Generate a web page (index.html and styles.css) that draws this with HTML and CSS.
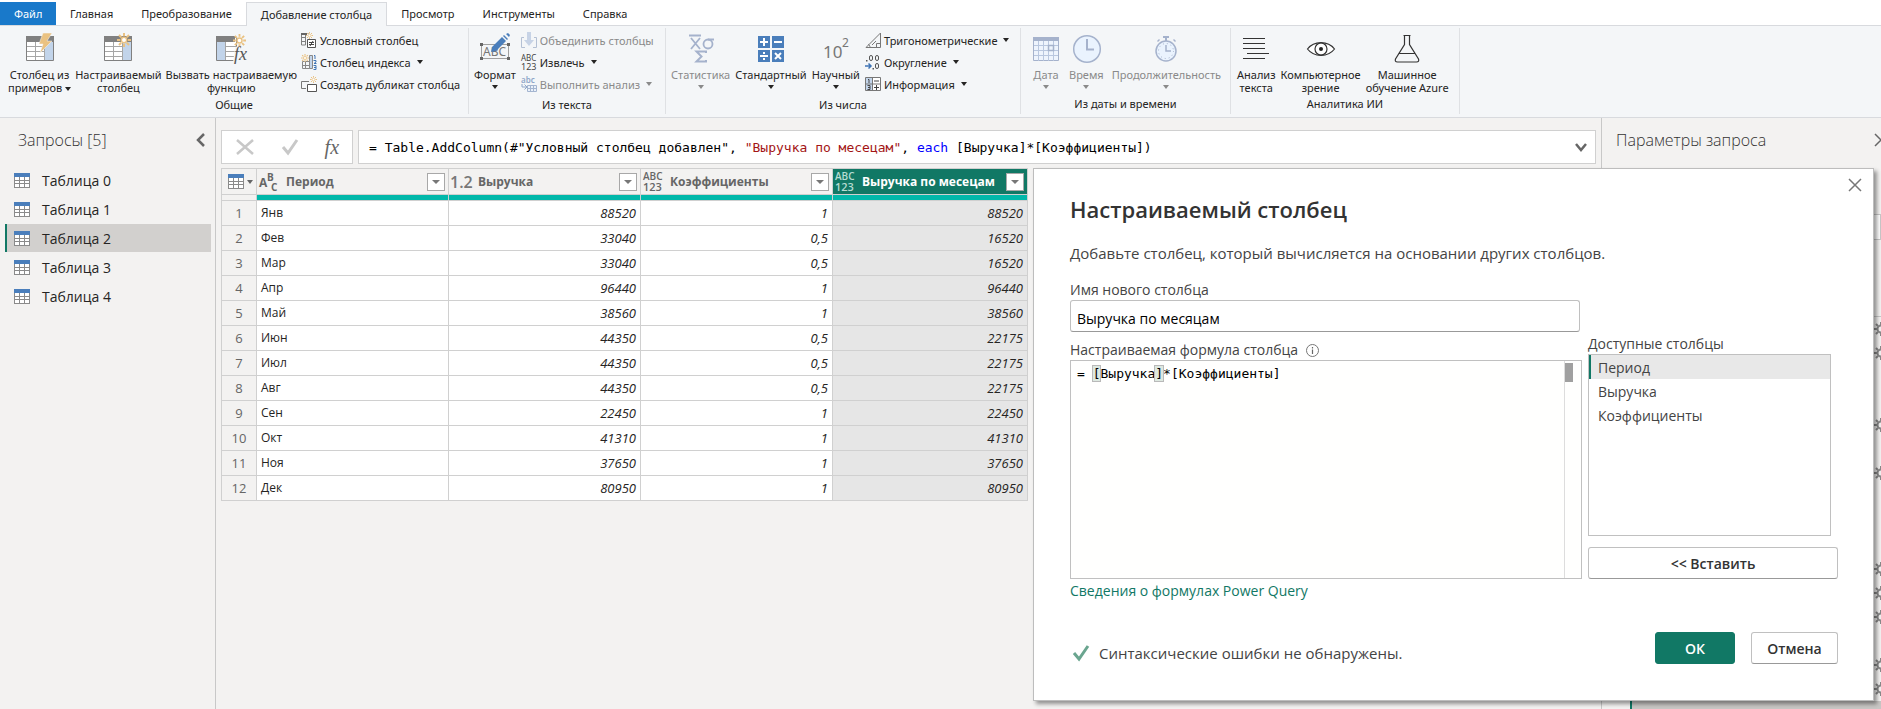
FILE: index.html
```html
<!DOCTYPE html>
<html lang="ru">
<head>
<meta charset="utf-8">
<title>Редактор Power Query</title>
<link rel="stylesheet" href="styles.css">
</head>
<body>
<svg class="defs" width="0" height="0" aria-hidden="true">
  <symbol id="burst" viewBox="0 0 14 14"><path d="M7 0v3M7 11v3M0 7h3M11 7h3M2 2l2.200 2.200M9.800 9.800L12 12M12 2L9.800 4.200M4.200 9.800L2 12" stroke="#eac282" stroke-width="2" fill="none"/><circle cx="7" cy="7" r="2.700" fill="#fff" stroke="#eac282" stroke-width="1.500"/></symbol>
  <symbol id="table16" viewBox="0 0 16 15"><path d="M0 0h16v15H0z" fill="#8a8a8a"/><path d="M0 0h16v4H0z" fill="#4a7ebb"/><path d="M1 4h4v3H1zM6 4h4v3H6zM11 4h4v3h-4zM1 8h4v2H1zM6 8h4v2H6zM11 8h4v2h-4zM1 11h4v3H1zM6 11h4v3H6zM11 11h4v3h-4z" fill="#fff"/></symbol>
  <symbol id="gear" viewBox="0 0 14 14"><circle cx="7" cy="7" r="3.500" fill="none" stroke="#8a8a8a" stroke-width="2"/><path d="M7 0v3M7 11v3M0 7h3M11 7h3M2 2l2 2M10 10l2 2M12 2l-2 2M4 10l-2 2" stroke="#8a8a8a" stroke-width="2"/></symbol>
</svg>
<div class="app">
  <nav class="tabs">
    <button class="tab file">Файл</button>
    <button class="tab">Главная</button>
    <button class="tab">Преобразование</button>
    <button class="tab active">Добавление столбца</button>
    <button class="tab">Просмотр</button>
    <button class="tab">Инструменты</button>
    <button class="tab">Справка</button>
  </nav>
  <div class="ribbon">
    <section class="group g1">
      <div class="tools">
        <button class="big"><svg width="30" height="30" viewBox="0 0 30 30"><path d="M1.500 4.500h27v23h-27z" fill="#fff" stroke="#808080"/><path d="M1 3h28v6H1z" fill="#808080"/><path d="M19 9h9v18h-9z" fill="#c2d4ea"/><path d="M2 13.500h17M2 18.500h17M2 23.500h17M10.500 9v18M19.500 9v18" stroke="#a6a6a6"/><path d="M18 0h9l-5 8h5L15 20l3-9h-4z" fill="#eac282" stroke="#f4f6f8" stroke-width=".5"/></svg><span>Столбец из<br>примеров<i class="dd"></i></span></button>
        <button class="big"><svg width="30" height="30" viewBox="0 0 30 30"><path d="M1.500 4.500h27v23h-27z" fill="#fff" stroke="#808080"/><path d="M1 3h28v6H1z" fill="#808080"/><path d="M19 9h9v18h-9z" fill="#c2d4ea"/><path d="M2 13.500h17M2 18.500h17M2 23.500h17M10.500 9v18M19.500 9v18" stroke="#a6a6a6"/><use href="#burst" x="14" y="0" width="14" height="14"/></svg><span>Настраиваемый<br>столбец</span></button>
        <button class="big"><svg width="30" height="30" viewBox="0 0 30 30"><path d="M.5 4.500h20v23H.5z" fill="#fff" stroke="#808080"/><path d="M0 3h19v6H0z" fill="#808080"/><path d="M1 9h8v18H1z" fill="#c2d4ea"/><path d="M9 13.500h12M9 18.500h12M9 23.500h12M9.500 9v18" stroke="#a6a6a6"/><path d="M19 14h11v16H17z" fill="#f4f6f8"/><use href="#burst" x="17" y="1" width="13" height="13"/><text x="18" y="27" class="fxi" font-size="18">fx</text></svg><span>Вызвать настраиваемую<br>функцию</span></button>
        <div class="list">
          <button class="small"><svg width="16" height="16" viewBox="0 0 16 16"><path d="M.5 1.500h7M.5 1v12h4M.5 5.500h4M.5 9.500h4M4.500 3v10" stroke="#808080" fill="none"/><path d="M0 1h6v2H0z" fill="#666"/><use href="#burst" x="5" y="0" width="7" height="7"/><path d="M6.500 7.500h8v8h-8z" fill="#fff" stroke="#555"/><path d="M8 10.500h5M8 12.500h5M12 9l-3 5" stroke="#444" fill="none"/></svg>Условный столбец</button>
          <button class="small"><svg width="16" height="16" viewBox="0 0 16 16"><path d="M1.500 7.500h7v7h-7zM4.500 7v8M1 11.500h7" stroke="#888" fill="none"/><path d="M8.500 1.500h3v13h-3z" fill="#c2d4ea" stroke="#888"/><use href="#burst" x="0" y="0" width="8" height="8"/><path d="M13 1.500h1V5M12.500 6.500h2.500v1.500l-2 1.500h2.500M12.500 11.500h2.500v4h-2.500M13 13.500h2" fill="none" stroke="#3f74b5"/></svg>Столбец индекса<i class="dd gap"></i></button>
          <button class="small"><svg width="16" height="16" viewBox="0 0 16 16"><path d="M8 5.500H.5v7H5" fill="none" stroke="#777"/><path d="M6.500 8.500h9v7h-9z" fill="#fff" stroke="#555"/><use href="#burst" x="9" y="0" width="7" height="7"/></svg>Создать дубликат столбца</button>
        </div>
      </div>
      <h2>Общие</h2>
    </section>
    <section class="group g2">
      <div class="tools">
        <button class="big"><svg width="30" height="30" viewBox="0 0 30 30"><path d="M1.500 11.500h27v14h-27z" fill="none" stroke="#a0a0a0"/><text x="3" y="23" font-size="12" fill="#777">ABC</text><path d="M0 10h3v3H0zM27 10h3v3h-3zM0 24h3v3H0zM27 24h3v3h-3z" fill="#666"/><path d="M22 4l4 4-10 10-5 1 1-5zM23 3l1-1 4 4-1 1zM26 1l2-1 2 2-1 2z" fill="#4a7ebb"/></svg><span>Формат<i class="dd under"></i></span></button>
        <div class="list">
          <button class="small off"><svg width="16" height="16" viewBox="0 0 16 16"><path d="M3 5.500H.5v10H4M13 5.500h2.500v10H12" stroke="#b4c0d4" fill="none"/><path d="M6 0h4v8h3l-5 6-5-6h3z" fill="#c7d3e6"/></svg>Объединить столбцы</button>
          <button class="small"><svg width="16" height="16" viewBox="0 0 16 16"><text x="0" y="7" font-size="8" fill="#444">ABC</text><text x="0" y="16" font-size="9" fill="#444">123</text></svg>Извлечь<i class="dd gap"></i></button>
          <button class="small off"><svg width="16" height="16" viewBox="0 0 16 16"><text x="0" y="7" font-size="8" class="semi" fill="#8fa6c9">abc</text><path d="M1 8v3h4M3.500 8.500L6 11l-2.500 2.500" stroke="#8fa6c9" fill="none"/><path d="M6.500 9.500h9v6h-9zM7 12.500h9M9.500 9v7M12.500 9v7" fill="#eaf1fa" stroke="#a4b5d0"/></svg>Выполнить анализ<i class="dd gap"></i></button>
        </div>
      </div>
      <h2>Из текста</h2>
    </section>
    <section class="group g3">
      <div class="tools">
        <button class="big off"><svg width="30" height="30" viewBox="0 0 30 30"><path d="M3 2.500h12M5 5l9 11M14 5L5 16M28 6.500h-6" stroke="#a5b2cc" stroke-width="1.800" fill="none"/><circle cx="22" cy="11" r="4.500" fill="none" stroke="#a5b2cc" stroke-width="1.800"/><path d="M20 20v-1.500H10.500l5 5-5 5H20V27" stroke="#a5b2cc" stroke-width="2" fill="none"/></svg><span>Статистика<i class="dd under"></i></span></button>
        <button class="big"><svg width="30" height="30" viewBox="0 0 30 30"><path d="M2 3h12v12H2zM16 3h12v12H16zM2 17h12v12H2zM16 17h12v12H16z" fill="#4a7ebb"/><path d="M4 9h8M8 5v8M18 9h8M4 23h8M19 20l6 6M25 20l-6 6" stroke="#fff" stroke-width="2"/><path d="M7 19h2v2H7zM7 25h2v2H7z" fill="#fff"/></svg><span>Стандартный<i class="dd under"></i></span></button>
        <button class="big"><svg width="30" height="30" viewBox="0 0 30 30"><g fill="#777"><text x="2" y="25" font-size="17">10</text><text x="21" y="14" font-size="12">2</text></g></svg><span>Научный<i class="dd under"></i></span></button>
        <div class="list">
          <button class="small"><svg width="16" height="16" viewBox="0 0 16 16"><path d="M1 15.500h14.500V1zM5 15.500c0-2-1-3-2-3M11.500 15v-3.500H15M7 13l4-4" stroke="#777" fill="none"/></svg>Тригонометрические<i class="dd gap"></i></button>
          <button class="small"><svg width="16" height="16" viewBox="0 0 16 16"><g fill="none" stroke="#555"><rect x="4.500" y="1.500" width="3" height="5" rx="1.500"/><rect x="10.500" y="1.500" width="3" height="5" rx="1.500"/><rect x="10.500" y="9.500" width="3" height="5" rx="1.500"/></g><path d="M1 6h1.500v1.500H1zM7.500 14H9v1.500H7.500z" fill="#555"/><path d="M0 12h6M3.500 9.500L6 12l-2.500 2.500" stroke="#3f74b5" stroke-width="1.500" fill="none"/></svg>Округление<i class="dd gap"></i></button>
          <button class="small"><svg width="16" height="16" viewBox="0 0 16 16"><path d="M.5 1.500h15v13H.5z" fill="#fff" stroke="#777"/><path d="M1 2h6v12H1z" fill="#c2d4ea"/><path d="M7.500 1v14M1 8h14" stroke="#777"/><path d="M9 5h5M9 11.500h5M11.500 9v5M3 3.500h1V7M2.500 9.500h2.500v4H2.500M3 11.500h2" stroke="#444" fill="none"/></svg>Информация<i class="dd gap"></i></button>
        </div>
      </div>
      <h2>Из числа</h2>
    </section>
    <section class="group g4">
      <div class="tools">
        <button class="big off"><svg width="30" height="30" viewBox="0 0 30 30"><path d="M2.500 4.500h25v23h-25z" fill="#eef4fd" stroke="#a5b2cc"/><path d="M2 4h26v4H2z" fill="#a5b2cc"/><path d="M3 12.500h24M3 17.500h24M3 22.500h24M7.500 8v20M12.500 8v20M17.500 8v20M22.500 8v20" stroke="#b9c7df"/><path d="M17.500 12.500h5v5h-5z" fill="#eef4fd" stroke="#a5b2cc" stroke-width="1.500"/></svg><span>Дата<i class="dd under"></i></span></button>
        <button class="big off"><svg width="30" height="30" viewBox="0 0 30 30"><circle cx="16" cy="16" r="13.300" fill="#eaf3fe" stroke="#a5b2cc" stroke-width="1.500"/><path d="M16 6v10.500h7" fill="none" stroke="#a5b2cc" stroke-width="2"/></svg><span>Время<i class="dd under"></i></span></button>
        <button class="big off"><svg width="30" height="30" viewBox="0 0 30 30"><path d="M12 3h6v2h-2v3h-2V5h-2zM6 8l2-2 1 1-2 2zM23 6l2 2-1 1-2-2z" fill="#a5b2cc"/><circle cx="15" cy="18" r="10" fill="#eaf3fe" stroke="#a5b2cc" stroke-width="1.500"/><path d="M15 12v6h5" fill="none" stroke="#a5b2cc" stroke-width="1.500"/><circle cx="15" cy="18" r="7.500" fill="none" stroke="#a5b2cc" stroke-dasharray="1 3"/></svg><span>Продолжительность<i class="dd under"></i></span></button>
      </div>
      <h2>Из даты и времени</h2>
    </section>
    <section class="group g5">
      <div class="tools">
        <button class="big"><svg width="30" height="30" viewBox="0 0 30 30"><path d="M2 5.500h22M2 10.500h22M2 15.500h22M6 20.500h22M2 25.500h22" stroke="#333"/></svg><span>Анализ<br>текста</span></button>
        <button class="big"><svg width="30" height="30" viewBox="0 0 30 30"><path d="M1.500 16C8 7.500 22 7.500 28.500 16 22 24.500 8 24.500 1.500 16z" fill="#fff" stroke="#333" stroke-width="1.200"/><circle cx="15" cy="16" r="6" fill="none" stroke="#333" stroke-width="1.200"/><circle cx="15" cy="16" r="2" fill="#222"/></svg><span>Компьютерное<br>зрение</span></button>
        <button class="big"><svg width="30" height="30" viewBox="0 0 30 30"><path d="M11.500 2.500h7M12.500 2.500v9L3.500 26q-1 3 2 3h19q3 0 2-3L17.500 11.500v-9M7 20.500h16" fill="none" stroke="#333" stroke-width="1.200"/></svg><span>Машинное<br>обучение Azure</span></button>
      </div>
      <h2>Аналитика ИИ</h2>
    </section>
  </div>
  <div class="workspace">
    <aside class="queries">
      <header><h1>Запросы [5]</h1><button class="plain" aria-label="Свернуть"><svg width="10" height="14" viewBox="0 0 10 14"><path d="M8 1L2 7l6 6" fill="none" stroke="#666" stroke-width="2.500"/></svg></button></header>
      <ul>
        <li><svg width="16" height="15"><use href="#table16"/></svg>Таблица 0</li>
        <li><svg width="16" height="15"><use href="#table16"/></svg>Таблица 1</li>
        <li class="sel"><svg width="16" height="15"><use href="#table16"/></svg>Таблица 2</li>
        <li><svg width="16" height="15"><use href="#table16"/></svg>Таблица 3</li>
        <li><svg width="16" height="15"><use href="#table16"/></svg>Таблица 4</li>
      </ul>
    </aside>
    <main class="center">
      <div class="formula">
        <div class="fbtns">
          <button class="plain" aria-label="Отменить"><svg width="20" height="18" viewBox="0 0 20 18"><path d="M2 2l16 14M18 2L2 16" stroke="#c8c8c8" stroke-width="2.500"/></svg></button>
          <button class="plain" aria-label="Применить"><svg width="18" height="18" viewBox="0 0 18 18"><path d="M2 9l5 6L16 2" fill="none" stroke="#c8c8c8" stroke-width="3"/></svg></button>
          <button class="plain fx">fx</button>
        </div>
        <div class="fbox"><code>= Table.AddColumn(#"Условный столбец добавлен", <b class="str">"Выручка по месецам"</b>, <b class="kw">each</b> [Выручка]*[Коэффициенты])</code>
          <button class="plain" aria-label="Развернуть"><svg width="12" height="9" viewBox="0 0 12 9"><path d="M1 1l5 6 5-6" fill="none" stroke="#666" stroke-width="2.500"/></svg></button></div>
      </div>
      <table class="grid">
        <colgroup><col class="cn"><col class="cd"><col class="cd"><col class="cd"><col class="cl"></colgroup>
        <thead>
          <tr>
            <th><div class="corner"><svg width="16" height="15"><use href="#table16"/></svg><i class="dd"></i></div></th>
            <th><div class="hd"><svg class="ty" width="20" height="20" viewBox="0 0 20 20"><g class="bold" fill="#666"><text x="0" y="15" font-size="12">A</text><text x="8" y="9" font-size="10">B</text><text x="12" y="19" font-size="10">C</text></g></svg><span>Период</span><button class="flt" aria-label="Фильтр"><i class="dd"></i></button></div></th>
            <th><div class="hd"><svg class="ty" width="20" height="20" viewBox="0 0 20 20"><text x="-1" y="16" font-size="16" class="semi" fill="#777">1.2</text></svg><span>Выручка</span><button class="flt" aria-label="Фильтр"><i class="dd"></i></button></div></th>
            <th><div class="hd"><svg class="ty" width="20" height="20" viewBox="0 0 20 20"><g class="semi" fill="#666"><text x="0" y="8" font-size="10">ABC</text><text x="0" y="19" font-size="11">123</text></g></svg><span>Коэффициенты</span><button class="flt" aria-label="Фильтр"><i class="dd"></i></button></div></th>
            <th class="on"><div class="hd"><svg class="ty" width="20" height="20" viewBox="0 0 20 20"><g class="semi" fill="#b5dcd2"><text x="0" y="8" font-size="10">ABC</text><text x="0" y="19" font-size="11">123</text></g></svg><span>Выручка по месецам</span><button class="flt" aria-label="Фильтр"><i class="dd"></i></button></div></th>
          </tr>
          <tr class="teal"><td></td><td></td><td></td><td></td><td></td></tr>
        </thead>
        <tbody>
          <tr><th>1</th><td>Янв</td><td>88520</td><td>1</td><td>88520</td></tr>
          <tr><th>2</th><td>Фев</td><td>33040</td><td>0,5</td><td>16520</td></tr>
          <tr><th>3</th><td>Мар</td><td>33040</td><td>0,5</td><td>16520</td></tr>
          <tr><th>4</th><td>Апр</td><td>96440</td><td>1</td><td>96440</td></tr>
          <tr><th>5</th><td>Май</td><td>38560</td><td>1</td><td>38560</td></tr>
          <tr><th>6</th><td>Июн</td><td>44350</td><td>0,5</td><td>22175</td></tr>
          <tr><th>7</th><td>Июл</td><td>44350</td><td>0,5</td><td>22175</td></tr>
          <tr><th>8</th><td>Авг</td><td>44350</td><td>0,5</td><td>22175</td></tr>
          <tr><th>9</th><td>Сен</td><td>22450</td><td>1</td><td>22450</td></tr>
          <tr><th>10</th><td>Окт</td><td>41310</td><td>1</td><td>41310</td></tr>
          <tr><th>11</th><td>Ноя</td><td>37650</td><td>1</td><td>37650</td></tr>
          <tr><th>12</th><td>Дек</td><td>80950</td><td>1</td><td>80950</td></tr>
        </tbody>
      </table>
    </main>
    <aside class="settings">
      <header><h1>Параметры запроса</h1><button class="plain" aria-label="Закрыть"><svg width="14" height="14" viewBox="0 0 14 14"><path d="M1 1l12 12M13 1L1 13" stroke="#666" stroke-width="1.500"/></svg></button></header>
      <div class="namebox"></div>
      <ol class="steps">
        <li><svg width="14" height="14"><use href="#gear"/></svg></li>
        <li><svg width="14" height="14"><use href="#gear"/></svg></li>
        <li></li>
        <li></li>
        <li><svg width="14" height="14"><use href="#gear"/></svg></li>
        <li></li>
        <li><svg width="14" height="14"><use href="#gear"/></svg></li>
        <li></li>
        <li></li>
        <li></li>
        <li><svg width="14" height="14"><use href="#gear"/></svg></li>
        <li><svg width="14" height="14"><use href="#gear"/></svg></li>
        <li><svg width="14" height="14"><use href="#gear"/></svg></li>
        <li></li>
        <li><svg width="14" height="14"><use href="#gear"/></svg></li>
        <li><svg width="14" height="14"><use href="#gear"/></svg></li>
        <li class="cur"></li>
      </ol>
    </aside>
  </div>
  <section class="dialog" role="dialog" aria-labelledby="dlg">
    <button class="plain close" aria-label="Закрыть"><svg width="14" height="14" viewBox="0 0 14 14"><path d="M1 1l12 12M13 1L1 13" stroke="#777" stroke-width="1.500"/></svg></button>
    <h1 id="dlg">Настраиваемый столбец</h1>
    <p class="lead">Добавьте столбец, который вычисляется на основании других столбцов.</p>
    <div class="cols">
      <div class="left">
        <label for="nm">Имя нового столбца</label>
        <input id="nm" type="text" value="Выручка по месяцам">
        <div class="lbl">Настраиваемая формула столбца <svg width="13" height="13" viewBox="0 0 13 13"><circle cx="6.500" cy="6.500" r="6" fill="none" stroke="#777"/><path d="M6.500 3v1.500M6.500 5.500V10" stroke="#666" stroke-width="1.200"/></svg></div>
        <div class="editor"><code>= <mark>[</mark>Выручка<mark>]</mark>*[Коэффициенты]</code><div class="bar"><i></i></div></div>
        <a href="#help">Сведения о формулах Power Query</a>
      </div>
      <div class="right">
        <div class="lbl2" id="avail">Доступные столбцы</div>
        <ul aria-labelledby="avail"><li class="sel">Период</li><li>Выручка</li><li>Коэффициенты</li></ul>
        <button class="btn">&lt;&lt; Вставить</button>
      </div>
    </div>
    <footer>
      <div class="status"><svg width="18" height="16" viewBox="0 0 18 16"><path d="M2 8l5 6 9-13" fill="none" stroke="#6aa58f" stroke-width="3"/></svg>Синтаксические ошибки не обнаружены.</div>
      <button class="btn ok">ОК</button>
      <button class="btn">Отмена</button>
    </footer>
  </section>
</div>
</body>
</html>
```
FILE: styles.css
```css
* { box-sizing: border-box; }
body { margin: 0; font-family: "Open Sans", "Noto Sans", sans-serif; font-size: 13px; color: #252423; background: #f3f2f1; }
button { font: inherit; color: inherit; background: none; border: 0; padding: 0; }
h1, h2, p, ul, ol { margin: 0; padding: 0; font-weight: 400; list-style: none; }
svg { display: block; flex: none; overflow: visible; }
.defs { position: absolute; }
.app { position: relative; display: flex; flex-direction: column; height: 100vh; overflow: hidden; }
.tabs, .ribbon { font-family: "Noto Sans", "Open Sans", sans-serif; font-size: 11px; flex: none; }
.tabs { display: flex; height: 26px; padding-top: 2px; background: #fff; border-bottom: 1px solid #d8dade; }
.tab { height: 23px; padding: 0 14px; white-space: nowrap; }
.tab.file { width: 56px; background: #1979ca; color: #fff; }
.tab.active { height: 24px; padding: 0 14px; background: #f4f6f8; border: 1px solid #d8dade; border-bottom: 0; }
.ribbon { display: flex; height: 92px; background: #f4f6f8; border-bottom: 1px solid #d8dade; padding-top: 2px; }
.group { display: flex; flex-direction: column; height: 86px; border-right: 1px solid #dfe1e4; }
.tools { display: flex; height: 70px; gap: 5px; padding: 0 5px; }
.group h2 { font-size: 11px; line-height: 20px; text-align: center; }
.big { display: flex; flex-direction: column; align-items: center; padding-top: 5px; line-height: 13px; white-space: nowrap; }
.big span { margin-top: 5px; }
.off { color: #8a8a8a; }
.list { display: flex; flex-direction: column; padding-top: 1px; }
.small { display: flex; align-items: center; gap: 3px; height: 22px; white-space: nowrap; }
.dd { display: inline-block; border: 3px solid transparent; border-top: 4px solid currentColor; border-bottom: 0; margin-left: 3px; vertical-align: middle; }
.dd.under { display: block; width: 6px; margin: 4px auto 0; }
.g1 { width: 469px; }
.g2 { width: 197px; }
.g3 { width: 355px; }
.g4 { width: 210px; }
.g5 { width: 229px; }
.g1 .tools { padding-left: 8px; gap: 4px; }
.g4 .tools { padding-left: 10px; gap: 8px; }
.g5 .tools { padding-left: 6px; }
.fxi { font-family: "Liberation Serif", serif; font-style: italic; fill: #555; }
.bold { font-weight: 700; }
.semi { font-weight: 600; }
.workspace { display: flex; flex: 1; min-height: 0; }
.queries { width: 216px; border-right: 1px solid #c8c8c8; }
.queries header { display: flex; justify-content: space-between; align-items: center; height: 44px; padding: 0 9px 0 18px; }
header h1 { font-size: 16px; font-weight: 300; color: #333; }
.queries ul { padding: 4px 4px 0 5px; }
.queries li { display: flex; align-items: center; gap: 12px; height: 28px; margin-bottom: 1px; padding-left: 7px; border-left: 2px solid transparent; font-size: 14px; }
.queries li.sel { background: #d2d0ce; border-left-color: #117865; }
.center { flex: 1; min-width: 0; padding: 12px 5px 0 5px; }
.formula { display: flex; gap: 5px; }
.fbtns { display: flex; align-items: center; justify-content: space-around; width: 132px; height: 34px; background: #fff; border: 1px solid #d0d0d0; }
.fx { font: italic 20px "Liberation Serif", serif; color: #666; }
.fbox { display: flex; flex: 1; align-items: center; justify-content: space-between; padding: 0 8px 0 10px; background: #fff; border: 1px solid #d0d0d0; }
code { font-family: "DejaVu Sans Mono", monospace; font-size: 13px; color: #000; white-space: pre; }
code b { font-weight: 400; }
.str { color: #a31515; }
.kw { color: #00f; }
.grid { margin-top: 4px; border-collapse: collapse; table-layout: fixed; width: 807px; border: 1px solid #c8c8c8; }
.cn { width: 35px; }
.cd { width: 192px; }
.grid th, .grid td { padding: 0; border: 1px solid #d0d0d0; height: 25px; line-height: 20px; }
.grid thead th { height: 26px; background: #f3f2f1; }
.hd { display: flex; align-items: center; gap: 7px; padding: 0 3px 0 2px; font-size: 12px; font-weight: 700; color: #666; white-space: nowrap; }
.on .hd { color: #fff; }
.grid thead th.on { background: #117865; }
.flt { display: flex; align-items: center; justify-content: center; margin-left: auto; width: 18px; height: 18px; background: #fff; border: 1px solid #a8a8a8; color: #777; }
.flt .dd { margin: 0; border-left-width: 4px; border-right-width: 4px; }
.corner { display: flex; align-items: center; padding-left: 6px; color: #666; }
.grid .teal td { height: 6px; background: #01b8aa; }
.grid .teal td:first-child { background: #f3f2f1; }
.grid tbody th { font-weight: 400; color: #666; }
.grid tbody td { background: #fff; padding: 0 4px; text-align: right; font-style: italic; }
.grid tbody td:nth-child(2) { text-align: left; font-style: normal; font-size: 12px; }
.grid tbody td:nth-child(5) { background: #e6e6e6; }
.settings { width: 280px; border-left: 1px solid #c8c8c8; overflow: hidden; }
.settings header { display: flex; justify-content: space-between; align-items: center; width: 286px; height: 44px; padding-left: 14px; }
.namebox { height: 26px; margin-top: 52px; background: #fff; border: 1px solid #c8c8c8; }
.steps { margin: 76px -7px 0 28px; border-top: 1px solid #c8c8c8; }
.steps li { display: flex; align-items: center; justify-content: flex-end; height: 24px; }
.steps .cur { background: #c8c6c4; border-left: 2px solid #117865; }
.dialog { position: absolute; top: 168px; right: 7px; width: 841px; padding: 0 35px 36px 36px; background: #fff; border: 1px solid #bdbdbd; box-shadow: 3px 3px 4px rgba(0,0,0,.4); color: #333; }
.close { position: absolute; top: 9px; right: 11px; }
.dialog h1 { margin-top: 24px; font-size: 22px; line-height: 32px; font-weight: 600; }
.lead { margin-top: 18px; font-size: 15px; line-height: 20px; color: #444; }
.cols { display: flex; gap: 6px; margin-top: 17px; font-size: 14px; color: #444; }
.left { display: flex; flex-direction: column; width: 512px; line-height: 20px; }
.left input { height: 32px; width: 510px; padding: 4px 6px 0; border: 1px solid #c0c0c0; border-bottom-color: #999; border-radius: 3px; font: inherit; color: #000; }
.lbl { display: flex; align-items: center; gap: 8px; margin-top: 8px; }
.lbl2 { line-height: 20px; }
.editor { display: flex; justify-content: space-between; height: 219px; border: 1px solid #c0c0c0; background: #fffffe; }
.editor code { padding: 5px 6px; line-height: 16px; }
mark { background: #dde8e0; outline: 1px solid #b9b9b9; color: inherit; }
.bar { width: 17px; border-left: 1px solid #ddd; padding-top: 2px; }
.bar i { display: block; width: 8px; height: 19px; background: #a0a0a0; }
.left a { margin-top: 2px; color: #117865; text-decoration: none; }
.right { display: flex; flex-direction: column; flex: 1; padding-top: 54px; }
.right ul { width: 243px; height: 182px; border: 1px solid #c0c0c0; }
.right li { height: 24px; line-height: 26px; padding-left: 7px; border-left: 2px solid transparent; }
.right li.sel { background: #e8e8e8; border-left-color: #117865; }
.btn { height: 32px; background: #fff; border: 1px solid #c0c0c0; border-bottom-color: #999; border-radius: 3px; font-size: 14px; font-weight: 600; color: #333; }
.right .btn { margin-top: 11px; }
footer { display: flex; align-items: center; margin-top: 31px; font-size: 15px; color: #444; }
.status { display: flex; align-items: center; gap: 9px; margin-right: auto; padding: 10px 0 0 2px; }
footer .btn { width: 87px; margin-left: 16px; }
footer .ok { width: 80px; background: #117865; border-color: #117865; color: #fff; }
```
